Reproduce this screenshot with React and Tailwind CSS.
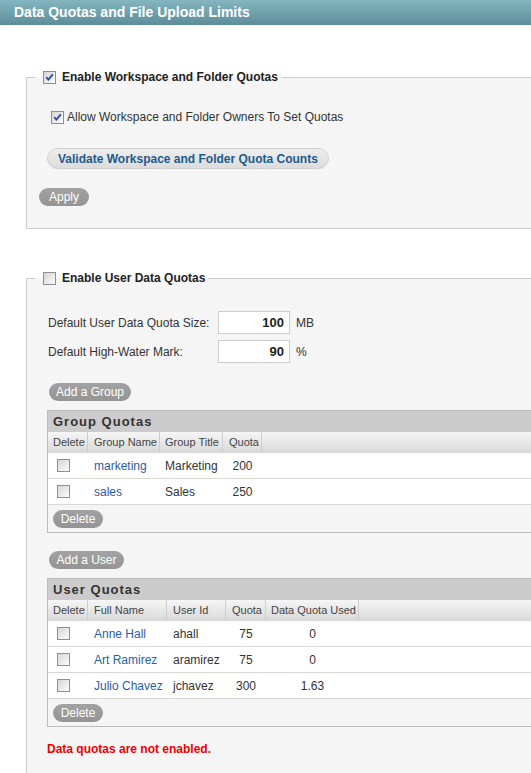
import React from "react";

const Cb = ({ checked }) => (
  <span className="inline-flex w-[13px] h-[13px] border border-[#8e8f8f] bg-gradient-to-br from-[#d6d6d6] to-[#fcfcfc] items-center justify-center shrink-0">
    {checked && (
      <svg width="9" height="9" viewBox="0 0 9 9">
        <path d="M1.2 4.2 L3.4 6.6 L7.8 1.4" stroke="#2c4c9c" strokeWidth="1.9" fill="none" />
      </svg>
    )}
  </span>
);

const Pill = ({ children, w }) => (
  <span
    className={`inline-flex items-center justify-center h-[18px] rounded-full bg-gradient-to-b from-[#a2a2a2] to-[#949494] text-white text-[12px] leading-none ${w}`}
  >
    {children}
  </span>
);

const Table = ({ title, cols, rows }) => (
  <div className="w-[580px] border border-[#bbbbbb] bg-[#f5f5f5]">
    <div className="h-[21px] bg-[#cccccc] flex items-center pl-[5px] text-[13px] font-bold tracking-[1px] text-[#333]">
      {title}
    </div>
    <div className="h-[21px] flex bg-gradient-to-b from-[#f6f6f6] to-[#d8d8d8] text-[11px] text-[#444]">
      {cols.map((c, i) => (
        <div
          key={i}
          className={`h-full flex items-center border-r border-[#cfcfcf] shrink-0 ${c.w} ${c.hp}`}
        >
          {c.label}
        </div>
      ))}
      <div className="flex-1" />
    </div>
    {rows.map((r, ri) => (
      <div key={ri} className="h-[26px] flex bg-white border-b border-[#d9d9d3] text-[12px] text-[#333]">
        {cols.map((c, i) => (
          <div
            key={i}
            className={`h-full flex items-center shrink-0 ${c.w} ${c.align}`}
          >
            {i === 0 ? (
              <span className="pl-[9px] flex"><Cb /></span>
            ) : i === 1 ? (
              <span className="text-[#2a5ea2]">{r[0]}</span>
            ) : (
              r[i - 1]
            )}
          </div>
        ))}
      </div>
    ))}
    <div className="h-[27px] pt-[5px] pl-[5px]">
      <Pill w="w-[50px]">Delete</Pill>
    </div>
  </div>
);

const groupCols = [
  { label: "Delete", w: "w-[40px]", hp: "pl-[5px]", align: "" },
  { label: "Group Name", w: "w-[72px]", hp: "pl-[6px]", align: "pl-[6px]" },
  { label: "Group Title", w: "w-[63px]", hp: "pl-[5px]", align: "pl-[5px]" },
  { label: "Quota", w: "w-[39px]", hp: "pl-[6px]", align: "justify-center" },
];

const userCols = [
  { label: "Delete", w: "w-[40px]", hp: "pl-[5px]", align: "" },
  { label: "Full Name", w: "w-[79px]", hp: "pl-[6px]", align: "pl-[6px]" },
  { label: "User Id", w: "w-[59px]", hp: "pl-[6px]", align: "pl-[6px]" },
  { label: "Quota", w: "w-[40px]", hp: "pl-[6px]", align: "justify-center" },
  { label: "Data Quota Used", w: "w-[93px]", hp: "pl-[5px]", align: "justify-center" },
];

export default function App() {
  return (
    <div className="w-[531px] min-h-[773px] overflow-hidden bg-white font-['Liberation_Sans',Arial,sans-serif] text-[12px] text-[#333]">
      <div className="h-[25px] bg-gradient-to-b from-[#84b6c2] to-[#5c8d98] flex items-center pl-[14px] text-white font-bold text-[14px]">
        Data Quotas and File Upload Limits
      </div>
      <div className="w-[700px] pl-[26px] pt-[44px]">
        <fieldset className="w-[620px] border border-[#cccccc] bg-[#f5f5f5] pb-[22px]">
          <legend className="ml-[8px] pl-[8px] pr-[3px] leading-[16px]">
            <span className="flex items-center gap-[6px] h-[16px] font-bold text-[#222]">
              <Cb checked />
              Enable Workspace and Folder Quotas
            </span>
          </legend>
          <div className="mt-[25px] ml-[24px] flex items-center gap-[3px] h-[14px]">
            <Cb checked />
            <span>Allow Workspace and Folder Owners To Set Quotas</span>
          </div>
          <div className="mt-[24px] ml-[20px] flex">
            <span className="inline-flex items-center h-[21px] px-[10px] rounded-full border border-[#cfcfcf] bg-gradient-to-b from-[#eeeeee] to-[#dcdcdc] text-[#1e5a8e] font-bold text-[12px]">
              Validate Workspace and Folder Quota Counts
            </span>
          </div>
          <div className="mt-[19px] ml-[12px] flex">
            <Pill w="w-[50px]">Apply</Pill>
          </div>
        </fieldset>

        <fieldset className="mt-[41px] w-[620px] border border-[#cccccc] bg-[#f5f5f5] pb-[40px]">
          <legend className="ml-[8px] pl-[8px] pr-[3px] leading-[16px]">
            <span className="flex items-center gap-[6px] h-[16px] font-bold text-[#222]">
              <Cb />
              Enable User Data Quotas
            </span>
          </legend>
          <div className="mt-[25px] ml-[21px] flex items-center h-[23px]">
            <span className="w-[170px]">Default User Data Quota Size:</span>
            <span className="w-[72px] h-[23px] bg-white border border-[#cccccc] flex items-center justify-end pr-[5px] font-bold text-[13px] text-[#222]">
              100
            </span>
            <span className="ml-[6px]">MB</span>
          </div>
          <div className="mt-[6px] ml-[21px] flex items-center h-[23px]">
            <span className="w-[170px]">Default High-Water Mark:</span>
            <span className="w-[72px] h-[23px] bg-white border border-[#cccccc] flex items-center justify-end pr-[5px] font-bold text-[13px] text-[#222]">
              90
            </span>
            <span className="ml-[6px]">%</span>
          </div>
          <div className="mt-[20px] ml-[22px] flex">
            <Pill w="w-[82px]">Add a Group</Pill>
          </div>
          <div className="mt-[9px] ml-[20px]">
            <Table
              title="Group Quotas"
              cols={groupCols}
              rows={[
                ["marketing", "Marketing", "200"],
                ["sales", "Sales", "250"],
              ]}
            />
          </div>
          <div className="mt-[18px] ml-[22px] flex">
            <Pill w="w-[75px]">Add a User</Pill>
          </div>
          <div className="mt-[9px] ml-[20px]">
            <Table
              title="User Quotas"
              cols={userCols}
              rows={[
                ["Anne Hall", "ahall", "75", "0"],
                ["Art Ramirez", "aramirez", "75", "0"],
                ["Julio Chavez", "jchavez", "300", "1.63"],
              ]}
            />
          </div>
          <div className="mt-[13px] ml-[20px] text-[#ee0000] font-bold">
            Data quotas are not enabled.
          </div>
        </fieldset>
      </div>
    </div>
  );
}
